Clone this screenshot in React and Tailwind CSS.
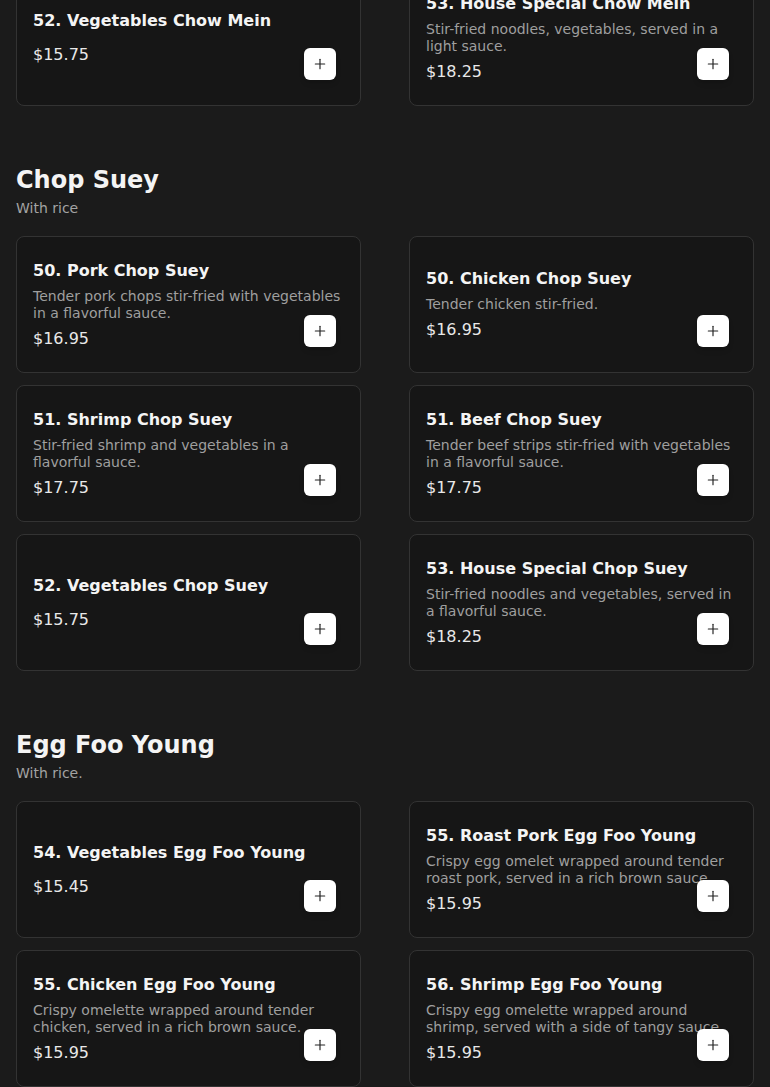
import React from 'react';
import { Plus } from 'lucide-react';

const sections = [
    {
        // only the last row of this section is still on screen
        id: 'chow-mein',
        items: [
            { name: '52. Vegetables Chow Mein', price: '$15.75' },
            { name: '53. House Special Chow Mein', desc: 'Stir-fried noodles, vegetables, served in a light sauce.', price: '$18.25' },
        ],
    },
    {
        id: 'chop-suey',
        title: 'Chop Suey',
        note: 'With rice',
        items: [
            { name: '50. Pork Chop Suey', desc: 'Tender pork chops stir-fried with vegetables in a flavorful sauce.', price: '$16.95' },
            { name: '50. Chicken Chop Suey', desc: 'Tender chicken stir-fried.', price: '$16.95' },
            { name: '51. Shrimp Chop Suey', desc: 'Stir-fried shrimp and vegetables in a flavorful sauce.', price: '$17.75' },
            { name: '51. Beef Chop Suey', desc: 'Tender beef strips stir-fried with vegetables in a flavorful sauce.', price: '$17.75' },
            { name: '52. Vegetables Chop Suey', price: '$15.75' },
            { name: '53. House Special Chop Suey', desc: 'Stir-fried noodles and vegetables, served in a flavorful sauce.', price: '$18.25' },
        ],
    },
    {
        id: 'egg-foo-young',
        title: 'Egg Foo Young',
        note: 'With rice.',
        items: [
            { name: '54. Vegetables Egg Foo Young', price: '$15.45' },
            { name: '55. Roast Pork Egg Foo Young', desc: 'Crispy egg omelet wrapped around tender roast pork, served in a rich brown sauce.', price: '$15.95' },
            { name: '55. Chicken Egg Foo Young', desc: 'Crispy omelette wrapped around tender chicken, served in a rich brown sauce.', price: '$15.95' },
            { name: '56. Shrimp Egg Foo Young', desc: 'Crispy egg omelette wrapped around shrimp, served with a side of tangy sauce.', price: '$15.95' },
        ],
    },
];

const MenuCard = ({ item }) => (
    <div className="relative flex items-center h-[137px] px-4 rounded-lg border border-[#333333] bg-[#161616]">
        <div className="flex flex-col w-full">
            <h3 className="text-base leading-6 font-bold text-[#f4f4f4]">{item.name}</h3>
            {item.desc && (
                <p className="mt-[5px] text-sm leading-[17px] text-[#9f9f9f]">{item.desc}</p>
            )}
            <span className={`text-base leading-6 text-[#e8e8e8] ${item.desc ? 'mt-[5px]' : 'mt-2.5'}`}>
                {item.price}
            </span>
        </div>
        <button
            type="button"
            className="absolute bottom-[25px] right-6 w-8 h-8 flex items-center justify-center rounded-md bg-white text-[#222222] shadow-md"
        >
            <Plus size={16} strokeWidth={1.75} />
        </button>
    </div>
);

export default function App() {
    return (
        <div className="h-[1087px] overflow-hidden bg-[#1b1b1b] font-['DejaVu_Sans',sans-serif]">
            <div className="px-4 -mt-[31px]">
                {sections.map((section) => (
                    <section key={section.id}>
                        {section.title && (
                            <div className="mt-[58px] mb-[18px]">
                                <h2 className="text-2xl leading-8 font-bold text-[#f4f4f4]">{section.title}</h2>
                                <p className="mt-0.5 text-sm leading-5 text-[#a3a3a3]">{section.note}</p>
                            </div>
                        )}
                        <div className="grid grid-cols-2 gap-x-12 gap-y-3">
                            {section.items.map((item) => (
                                <MenuCard key={item.name} item={item} />
                            ))}
                        </div>
                    </section>
                ))}
            </div>
        </div>
    );
}
